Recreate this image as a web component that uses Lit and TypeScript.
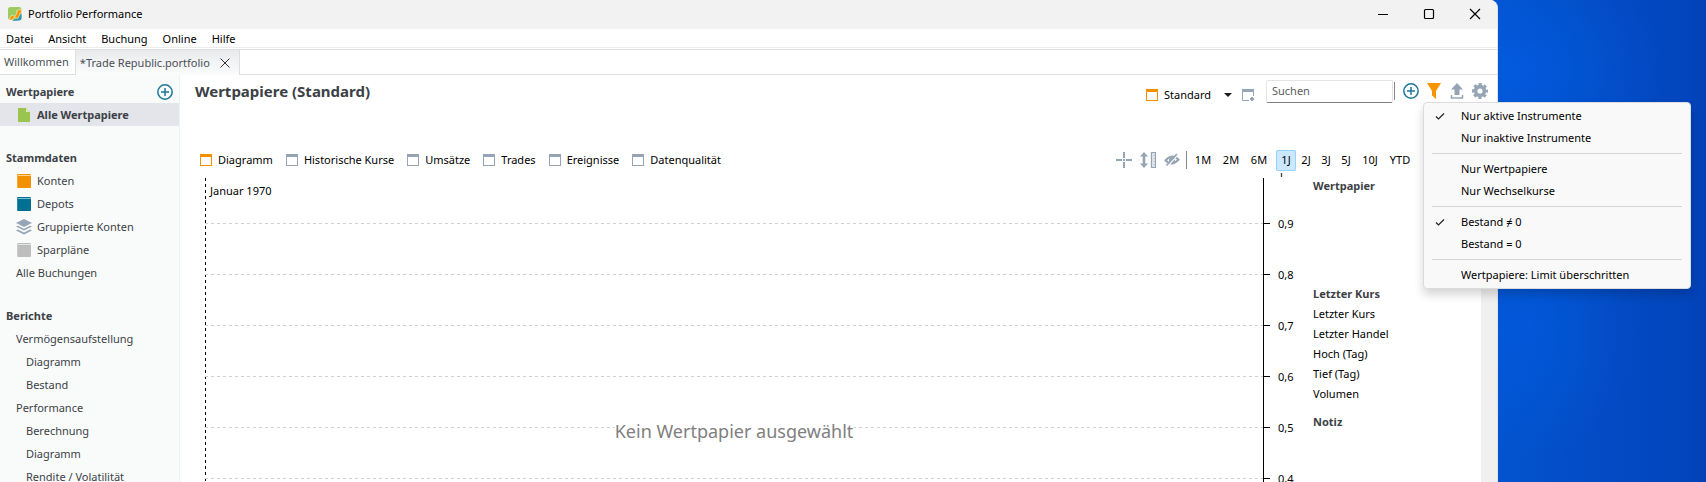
import { LitElement, html, css, svg } from "lit";
import { customElement, state } from "lit/decorators.js";
import { classMap } from "lit/directives/class-map.js";

type NavItem = { label: string; icon?: string; level: number; selected?: boolean };
type NavSection = { title: string; add?: boolean; items: NavItem[] };
type MenuEntry = { label: string; checked?: boolean } | null;

const SECTIONS: NavSection[] = [
  { title: "Wertpapiere", add: true, items: [{ label: "Alle Wertpapiere", icon: "file", level: 1, selected: true }] },
  {
    title: "Stammdaten",
    items: [
      { label: "Konten", icon: "bookOrange", level: 1 },
      { label: "Depots", icon: "bookBlue", level: 1 },
      { label: "Gruppierte Konten", icon: "layers", level: 1 },
      { label: "Sparpläne", icon: "bookGray", level: 1 },
      { label: "Alle Buchungen", level: 1 },
    ],
  },
  {
    title: "Berichte",
    items: [
      { label: "Vermögensaufstellung", level: 1 },
      { label: "Diagramm", level: 2 },
      { label: "Bestand", level: 2 },
      { label: "Performance", level: 1 },
      { label: "Berechnung", level: 2 },
      { label: "Diagramm", level: 2 },
      { label: "Rendite / Volatilität", level: 2 },
    ],
  },
];

const VIEWS = ["Diagramm", "Historische Kurse", "Umsätze", "Trades", "Ereignisse", "Datenqualität"];
const RANGES = ["1M", "2M", "6M", "1J", "2J", "3J", "5J", "10J", "YTD"];
const TICKS = ["1", "0,9", "0,8", "0,7", "0,6", "0,5", "0,4"];
const QUOTE_FIELDS = ["Letzter Kurs", "Letzter Handel", "Hoch (Tag)", "Tief (Tag)", "Volumen"];
const FILTERS: MenuEntry[] = [
  { label: "Nur aktive Instrumente", checked: true },
  { label: "Nur inaktive Instrumente" },
  null,
  { label: "Nur Wertpapiere" },
  { label: "Nur Wechselkurse" },
  null,
  { label: "Bestand ≠ 0", checked: true },
  { label: "Bestand = 0" },
  null,
  { label: "Wertpapiere: Limit überschritten" },
];

const book = (c: string, top: string) => svg`
  <rect x="1" y="1" width="14" height="14" rx="1" fill=${c}></rect>
  <path d="M2 2.500h13" stroke=${top} stroke-width="1"></path>
  <path d="M1.500 1v14" stroke=${top} stroke-width="1" opacity=".35"></path>`;

const viewFrame = (c: string) => svg`
  <rect x="2.500" y="2.500" width="11" height="11" fill="#fff" stroke=${c}></rect>
  <rect x="2" y="2" width="12" height="3" fill=${c}></rect>`;

const ICONS: Record<string, unknown> = {
  app: svg`
    <rect x="1" y="1" width="13.500" height="13" rx="2.500" fill="#9ccb62"></rect>
    <path d="M5 15l5-3 4.500-5v5a2.500 2.500 0 0 1-2.500 2.500z" fill="#2f94b4"></path>
    <path d="M2 14l2.500-5 3.500 1.500L10.500 6 9 5l5-2 .5 5-1.300-.7L11 12.500 7 11.500 5 14z" fill="#f79400" stroke="#fff" stroke-width=".5"></path>`,
  file: svg`<path d="M2 1h8l4 4v10H2z" fill="#9bc44f"></path><path d="M10 1v4h4z" fill="#d9eabb"></path>`,
  bookOrange: book("#f29100", "#ffd591"),
  bookBlue: book("#006f94", "#7fc0d4"),
  bookGray: book("#bdbdbd", "#e4e4e4"),
  layers: svg`
    <path d="M8 0l8 4-8 4-8-4z" fill="#95a5b5"></path>
    <path d="M1.800 6.700L8 9.800l6.200-3.100L16 7.600l-8 4-8-4z" fill="#95a5b5"></path>
    <path d="M1.800 10.500L8 13.600l6.200-3.100 1.800.9-8 4-8-4z" fill="#95a5b5"></path>`,
  plus: svg`
    <circle cx="8" cy="8" r="7.200" fill="none" stroke="#1c7896" stroke-width="1.500"></circle>
    <path d="M8 4v8M4 8h8" stroke="#1c7896" stroke-width="1.500"></path>`,
  viewOn: viewFrame("#f29100"),
  viewOff: viewFrame("#95a5b5"),
  viewNew: svg`
    <path d="M9 13.500H2.500V3h11v6" fill="none" stroke="#95a5b5"></path>
    <rect x="2" y="2" width="12" height="3" fill="#95a5b5"></rect>
    <path d="M12 10v4M10 12h4" stroke="#95a5b5" stroke-width="2"></path>`,
  arrow: svg`<path d="M4 6h8l-4 4z" fill="#1a1a1a"></path>`,
  funnel: svg`<path d="M1 0h14l-5 8v8L6 12.500V8z" fill="#f79400"></path>`,
  upload: svg`<path d="M8 0l6 6.500h-3.500V12h-5V6.500H2z" fill="#95a5b5"></path><path d="M2.500 12v3h11v-3" fill="none" stroke="#95a5b5" stroke-width="1.500"></path>`,
  gear: svg`
    <circle cx="8" cy="8" r="4.400" fill="none" stroke="#95a5b5" stroke-width="3.600"></circle>
    <circle cx="8" cy="8" r="6.800" fill="none" stroke="#95a5b5" stroke-width="2.400" stroke-dasharray="3.200 2.140" stroke-dashoffset="1.600"></circle>`,
  cross: svg`<path d="M8 0v6M8 10v6M0 8h6M10 8h6M7 8h2" stroke="#95a5b5" stroke-width="2"></path>`,
  measure: svg`
    <path d="M4 0l4 4.500H5.300v7H8L4 16 0 11.500h2.700v-7H0z" fill="#95a5b5"></path>
    <rect x="11.500" y=".5" width="4" height="15" fill="#e8ecef" stroke="#95a5b5" stroke-width="1.300"></rect>
    <path d="M13 3.500h2M13 6.500h2M13 9.500h2M13 12.500h2" stroke="#95a5b5" stroke-width=".4"></path>`,
  eye: svg`
    <path d="M1.500 8.500Q8 1 14.500 7.500 8 15 1.500 8.500z" fill="none" stroke="#95a5b5" stroke-width="2"></path>
    <circle cx="8" cy="8" r="3" fill="#95a5b5"></circle>
    <path d="M13.500 3L3.500 14.500" stroke="#fff" stroke-width="1.200"></path>
    <path d="M13 2L2.500 13.500" stroke="#95a5b5" stroke-width="1.700"></path>`,
  check: svg`<path d="M4 8.500l2.500 2.500 5.500-5.500" fill="none" stroke="#222" stroke-width="1.200"></path>`,
  close: svg`<path d="M3.500 3.500l9 9M12.500 3.500l-9 9" fill="none" stroke="#333"></path>`,
  winMin: svg`<path d="M3 8.500h10" stroke="#000"></path>`,
  winMax: svg`<rect x="3.500" y="3.500" width="9" height="9" rx="1" fill="none" stroke="#000" stroke-width="1.200"></rect>`,
  winClose: svg`<path d="M3 3l10 10M13 3L3 13" stroke="#000" stroke-width="1.200"></path>`,
};

const icon = (name: string) =>
  html`<svg class="icon" viewBox="0 0 16 16" width="16" height="16" aria-hidden="true">${ICONS[name]}</svg>`;

const shared = css`
  * { box-sizing: border-box; }
  button, input {
    font: inherit;
    color: inherit;
    background: none;
    border: 0;
    padding: 0;
    margin: 0;
    white-space: nowrap;
  }
  h1, h2, ul { margin: 0; padding: 0; list-style: none; font-size: inherit; }
  .icon { display: block; flex: none; }
`;

@customElement("pp-sidebar")
export class PpSidebar extends LitElement {
  static styles = [
    shared,
    css`
      :host { display: block; background: #f9fbfb; border-right: 1px solid #eef2f2; padding-top: 5px; color: #3c4146; }
      .section { margin-bottom: 20px; }
      .head { display: flex; align-items: center; justify-content: space-between; height: 23px; padding: 0 6px; font-weight: 700; }
      .row a { display: flex; align-items: center; gap: 5px; height: 23px; padding-left: 16px; color: inherit; text-decoration: none; white-space: nowrap; }
      .row.deep a { padding-left: 26px; }
      .row.selected a { background: #e4e5ea; font-weight: 700; }
    `,
  ];

  render() {
    return html`${SECTIONS.map(
      (s) => html`<nav class="section" aria-label=${s.title}>
        <div class="head">
          <h2>${s.title}</h2>
          ${s.add ? html`<button aria-label="Neu">${icon("plus")}</button>` : null}
        </div>
        <ul>
          ${s.items.map(
            (i) => html`<li class=${classMap({ row: true, deep: i.level === 2, selected: !!i.selected })}>
              <a href="#">${i.icon ? icon(i.icon) : null}<span>${i.label}</span></a>
            </li>`
          )}
        </ul>
      </nav>`
    )}`;
  }
}

@customElement("pp-chart")
export class PpChart extends LitElement {
  static styles = [
    shared,
    css`
      :host { display: flex; position: relative; overflow: hidden; color: #000; }
      .plot {
        flex: 1;
        position: relative;
        margin-top: 5px;
        background: repeating-linear-gradient(#000 0 3px, transparent 3px 6px) left / 1px 100% no-repeat;
      }
      .line {
        height: 51px;
        background: repeating-linear-gradient(90deg, #d0d0d0 0 3px, transparent 3px 6px) bottom / 100% 1px no-repeat;
      }
      .line:first-of-type { height: 46px; }
      .date { position: absolute; left: 5px; top: 4px; line-height: 18px; }
      .empty {
        position: absolute;
        left: 50%;
        top: 240px;
        transform: translateX(-50%);
        background: #fff;
        color: #808080;
        font-size: 18px;
        line-height: 26px;
        white-space: nowrap;
      }
      .axis { width: 49px; margin-top: -26px; }
      .tick { display: flex; align-items: center; gap: 8px; height: 51px; }
      .tick::before { content: ""; width: 6px; height: 1px; background: #000; }
      .scale { width: 1px; margin-top: 5px; background: #000; }
    `,
  ];

  render() {
    return html`
      <div class="plot">
        ${TICKS.slice(1).map(() => html`<div class="line"></div>`)}
        <div class="date">Januar 1970</div>
        <div class="empty">Kein Wertpapier ausgewählt</div>
      </div>
      <div class="scale"></div>
      <div class="axis">${TICKS.map((t) => html`<div class="tick">${t}</div>`)}</div>
    `;
  }
}

@customElement("pp-filter-menu")
export class PpFilterMenu extends LitElement {
  static styles = [
    shared,
    css`
      :host {
        display: block;
        padding: 2px 8px;
        background: #f9f9f9;
        border: 1px solid #dcdcdc;
        border-radius: 4px;
        box-shadow: 0 6px 10px rgba(0, 0, 0, 0.16);
        color: #000;
      }
      .item { display: flex; align-items: center; width: 100%; height: 22px; gap: 13px; text-align: left; }
      .mark { width: 16px; }
      .sep { height: 1px; margin: 4px 0; background: #d4d4d4; }
    `,
  ];

  render() {
    return html`<div role="menu">
      ${FILTERS.map((f) =>
        f
          ? html`<button class="item" role="menuitemcheckbox" aria-checked=${f.checked ? "true" : "false"}>
              <span class="mark">${f.checked ? icon("check") : null}</span><span>${f.label}</span>
            </button>`
          : html`<div class="sep" role="separator"></div>`
      )}
    </div>`;
  }
}

@customElement("app-root")
export class AppRoot extends LitElement {
  @state() private view = "Diagramm";
  @state() private range = "1J";

  static styles = [
    shared,
    css`
      :host {
        display: grid;
        grid-template-columns: 1fr 208px;
        height: 100vh;
        overflow: hidden;
        position: relative;
        font: 11px/16px "Noto Sans", "Open Sans", sans-serif;
        color: #000;
        background:
          radial-gradient(ellipse 150px 110px at calc(100% - 190px) 70px, rgba(0, 98, 235, 0.5), transparent),
          radial-gradient(ellipse 110px 130px at calc(100% - 180px) 330px, rgba(0, 98, 235, 0.4), transparent),
          linear-gradient(90deg, #0353cf calc(100% - 208px), #0345bc calc(100% - 20px), #0340b5);
      }
      .window { display: flex; flex-direction: column; min-width: 0; min-height: 0; background: #fff; border-right: 1px solid #dde3ea; border-top-right-radius: 8px; overflow: hidden; }
      .title { display: flex; align-items: center; gap: 5px; flex: none; height: 29px; padding: 0 14px 2px 7px; background: #f2f2f2; }
      .controls { display: flex; gap: 30px; margin-left: auto; }
      .menubar { display: flex; flex: none; gap: 15px; height: 19px; padding: 1px 6px 0; align-items: center; border-bottom: 1px solid #ececec; }
      .files { display: flex; flex: none; height: 26px; margin-top: 1px; border-top: 1px solid #dedede; border-bottom: 1px solid #dedede; color: #4a4f55; }
      .file { display: flex; align-items: center; gap: 7px; padding: 0 6px 0 4px; border-right: 1px solid #dedede; }
      .file.open { background: linear-gradient(#e9eaec, #fbfcfc); margin-bottom: -1px; }
      .body { flex: 1; display: grid; grid-template-columns: 180px 1fr; min-height: 0; }
      .main { display: flex; flex-direction: column; min-width: 0; min-height: 0; overflow: hidden; }
      .header { display: flex; flex: none; height: 32px; align-items: center; padding: 0 9px 0 15px; color: #3c4146; }
      .header h1 { flex: 1; font-size: 15px; line-height: 22px; }
      .choice { display: flex; align-items: center; gap: 4px; color: #000; padding-top: 8px; margin-right: 10px; }
      .choice button { display: flex; align-items: center; gap: 4px; }
      .choice .current { margin-right: 5px; }
      .search { width: 127px; height: 23px; padding: 0 5px 2px; border: 1px solid #e4e4e4; border-bottom-color: #808080; border-radius: 2px; color: #555; }
      .search::placeholder { color: #5c5c5c; opacity: 1; }
      .rule { width: 1px; height: 18px; background: #888; }
      .actions { display: flex; gap: 7px; margin-left: 8px; }
      .header .rule { margin-left: 1px; }
      .views { display: flex; flex: none; align-items: center; height: 22px; margin-top: 42px; padding: 0 81px 0 18px; }
      .view { display: flex; align-items: center; gap: 4px; margin-right: 11px; }
      .tools { display: flex; align-items: center; gap: 8px; margin: 0 6px 0 auto; }
      .ranges { display: flex; align-items: center; margin-left: 2px; }
      .range { width: 20px; height: 21px; text-align: center; }
      .range.wide { width: 28px; }
      .range.long { width: 32px; }
      .range.active { margin-left: 3px; background: #cce8ff; box-shadow: inset 0 0 0 1px #99d1ff; border-radius: 2px; }
      .content { flex: 1; display: flex; min-height: 0; margin-top: 2px; overflow: hidden; }
      pp-chart { flex: 1; margin-left: 25px; }
      .info { width: 168px; padding-top: 5px; line-height: 20px; }
      .info h2 { line-height: 16px; color: #3c4146; }
      .quote { padding-top: 92px; }
      .quote ul { padding: 2px 0 10px; }
      .track { width: 16px; background: #f0f0f0; }
      pp-filter-menu { position: absolute; right: 15px; top: 102px; width: 268px; }
    `,
  ];

  render() {
    return html`
      <div class="window">
        <div class="title">
          ${icon("app")}<span>Portfolio Performance</span>
          <div class="controls">
            <button aria-label="Minimieren">${icon("winMin")}</button>
            <button aria-label="Maximieren">${icon("winMax")}</button>
            <button aria-label="Schließen">${icon("winClose")}</button>
          </div>
        </div>
        <div class="menubar">
          ${["Datei", "Ansicht", "Buchung", "Online", "Hilfe"].map((m) => html`<button>${m}</button>`)}
        </div>
        <div class="files">
          <button class="file">Willkommen</button>
          <button class="file open"><span>*Trade Republic.portfolio</span>${icon("close")}</button>
        </div>
        <div class="body">
          <pp-sidebar></pp-sidebar>
          <main class="main">
            <div class="header">
              <h1>Wertpapiere (Standard)</h1>
              <div class="choice">
                <button class="current">${icon("viewOn")}<span>Standard</span></button>
                <button aria-label="Ansicht wählen">${icon("arrow")}</button>
                <button aria-label="Neue Ansicht">${icon("viewNew")}</button>
              </div>
              <input class="search" type="text" placeholder="Suchen" aria-label="Suchen" />
              <span class="rule"></span>
              <div class="actions">
                <button aria-label="Neu">${icon("plus")}</button>
                <button aria-label="Filter">${icon("funnel")}</button>
                <button aria-label="Exportieren">${icon("upload")}</button>
                <button aria-label="Einstellungen">${icon("gear")}</button>
              </div>
            </div>
            <div class="views">
              ${VIEWS.map(
                (v) => html`<button class="view" @click=${() => (this.view = v)}>
                  ${icon(v === this.view ? "viewOn" : "viewOff")}<span>${v}</span>
                </button>`
              )}
              <div class="tools">
                <button aria-label="Fadenkreuz">${icon("cross")}</button>
                <button aria-label="Messen">${icon("measure")}</button>
                <button aria-label="Ausblenden">${icon("eye")}</button>
              </div>
              <span class="rule"></span>
              <div class="ranges">
                ${RANGES.map(
                  (r) => html`<button
                    class=${classMap({ range: true, wide: /M|10J/.test(r), long: r === "YTD", active: r === this.range })}
                    @click=${() => (this.range = r)}
                  >${r}</button>`
                )}
              </div>
            </div>
            <div class="content">
              <pp-chart></pp-chart>
              <aside class="info">
                <h2>Wertpapier</h2>
                <div class="quote">
                  <h2>Letzter Kurs</h2>
                  <ul>${QUOTE_FIELDS.map((f) => html`<li>${f}</li>`)}</ul>
                </div>
                <h2>Notiz</h2>
              </aside>
              <div class="track"></div>
            </div>
          </main>
        </div>
      </div>
      <pp-filter-menu></pp-filter-menu>
    `;
  }
}
